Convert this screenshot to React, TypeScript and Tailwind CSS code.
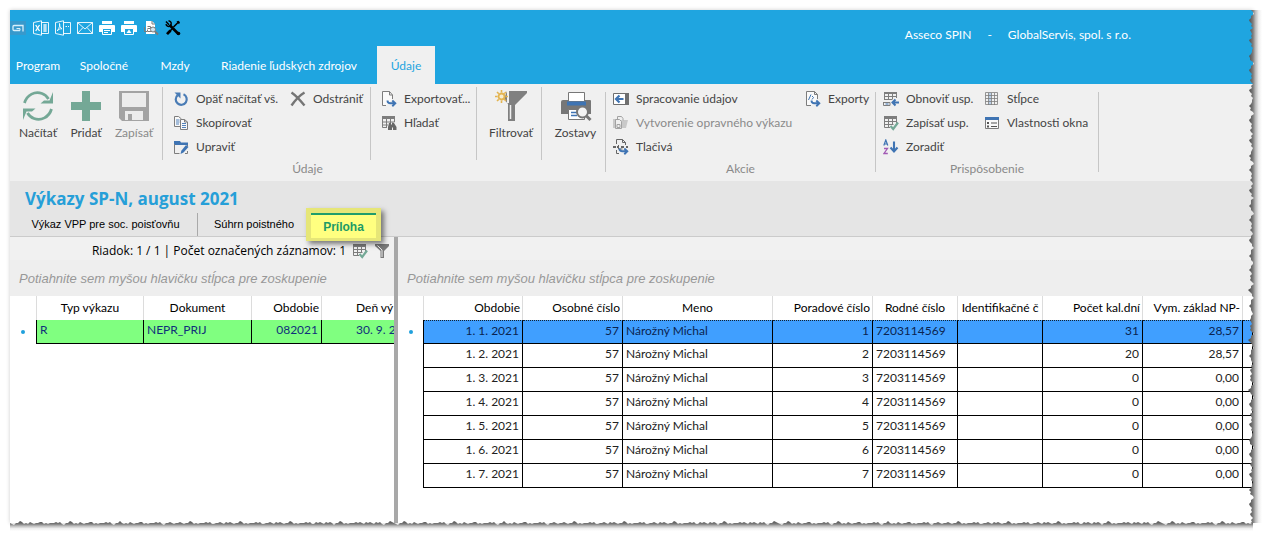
import type { ReactNode } from "react";

type EdgeProps = { className?: string };

const BLUE = "#3f74b3";
const GRAY = "#7d7d7d";
const GREEN = "#74a896";

function Svg({ size = 16, view = 16, children }: { size?: number; view?: number; children: ReactNode }) {
  return (
    <svg width={size} height={size} viewBox={`0 0 ${view} ${view}`} fill="none" className="shrink-0" aria-hidden="true">
      {children}
    </svg>
  );
}

/* ---- quick access icons ---- */

const LogoIcon = () => (
  <svg width="16" height="14" viewBox="0 0 16 14" fill="none" aria-hidden="true">
    <path d="M0 0h16v14H0z" fill="#3799cc" />
    <path d="M10 9.500H4a1 1 0 0 1-1-1v-3a1 1 0 0 1 1-1h9v6" stroke="#d8f0fb" strokeWidth="1.300" />
    <path d="M6.500 7.500H10v2" stroke="#d8f0fb" />
  </svg>
);

const ExcelIcon = () => (
  <Svg>
    <path d="M.5 2.500 8.500.800v14.400L.5 13.500zM8.500 2.500h7v11h-7M10 5h4M10 7h4M10 9h4M10 11h4M12 4v8" stroke="#fff" strokeWidth=".9" />
    <path d="m2.700 5 3.800 6m0-6-3.800 6" stroke="#fff" strokeWidth="1.300" />
  </Svg>
);

const PdfIcon = () => (
  <Svg>
    <path d="M.5 2.500 8.500.800v14.400L.5 13.500zM8.500 2.500h7v11h-7M10.500 6.500h1.500M13 6.500h1" stroke="#fff" strokeWidth=".9" />
    <path d="M4.500 3.500c.6 1.500.2 4-2.300 7.500.8-1.500 2.800-2.400 4.800-2.200C5.500 8 4.300 6 4.500 3.500z" stroke="#fff" strokeWidth=".9" />
  </Svg>
);

const MailIcon = () => (
  <Svg>
    <path d="M.5 2.500h15v11H.5zM.5 2.500 8 9l7.500-6.500M.5 13.500l5.500-6M15.500 13.500 10 7.500" stroke="#fff" strokeWidth=".9" />
  </Svg>
);

const PrinterIcon = ({ page }: { page?: boolean }) => (
  <Svg>
    <path d="M3 1h10v3H3zM1 5h14a1 1 0 0 1 1 1v6h-3V9H3v3H0V6a1 1 0 0 1 1-1z" fill="#fff" />
    <path d="M3.500 8.500h9v6h-9z" fill="#1fa5e0" stroke="#fff" />
    {page ? <path d="M5.500 13 8 9.500l2.500 3.500z" fill="#fff" /> : <path d="M5 10.500h6M5 12.500h4" stroke="#fff" />}
  </Svg>
);

const PreviewIcon = () => (
  <Svg>
    <path d="M3 1h6l3 3v10H3z" fill="#fff" />
    <path d="M9 1v3h3M4.500 6.500h3v2h-3M1.500 7v4.500h3v-2M5 11.500h4" stroke="#7b7b7b" />
    <circle cx="10" cy="9.500" r="2.500" fill="#cfe6f2" stroke="#7b7b7b" />
    <path d="m12 11.500 3 3" stroke="#7b7b7b" strokeWidth="2" />
  </Svg>
);

const ToolsIcon = () => (
  <Svg>
    <path d="m4.500 5 9 9" stroke="#000" strokeWidth="2.600" />
    <path d="m1 1.500 3 3.300M1 4.200C1.300 6 3 7 5.500 6L6.200 4C6.500 2 5 1 3.500.800" stroke="#000" strokeWidth="1.500" />
    <path d="m13.500 2-5 5M7 9l-4.500 4.500" stroke="#000" strokeWidth="1.600" />
    <path d="m11.500 1.500 2-.800 1.500 1.500-1 2z" fill="#000" />
    <path d="m4.500 9.500 2 2-3.500 3.500L1 13.300z" fill="#000" />
    <circle cx="13.500" cy="13.500" r="1.800" fill="#000" />
  </Svg>
);

/* ---- large ribbon icons ---- */

const ReloadIcon = () => (
  <Svg size={32} view={32}>
    <path d="M2.500 13C5 4.500 13 1 20 3.500c3 1 5 3 6.500 5.500M29.500 19C27 27.500 19 31 12 28.500 9 27.500 7 25.500 5.500 23" stroke={GREEN} strokeWidth="2.800" />
    <path d="M31 2v11.500H18.500L22 10.500h5.500zM1 30V18.500h12.500L10 21.500H4.500z" fill={GREEN} />
  </Svg>
);

const PlusIcon = () => (
  <Svg size={32} view={32}>
    <path d="M12 1h8v11h11v8H20v11h-8V20H1v-8h11z" fill={GREEN} />
  </Svg>
);

const SaveIcon = () => (
  <Svg size={32} view={32}>
    <path d="M1 1h30v30H4l-3-3z" fill="#a3a3a3" />
    <path d="M4 3h24v14H4zM7 21h18v9H7z" fill="#ececec" />
    <path d="M10 24h4v6h-4z" fill="#a3a3a3" />
  </Svg>
);

const FilterNewIcon = () => (
  <Svg size={32} view={32}>
    <path d="M12 1h20v2L20 15v16h-7V14L9 9z" fill="#808080" />
    <path d="M15.500 15v14" stroke="#f0f0f0" strokeWidth="1.500" />
    <path d="M13 1v12" stroke="#f0f0f0" strokeWidth="2" />
    <circle cx="6.500" cy="6.500" r="3" fill="#f7edcf" stroke="#e3b451" strokeWidth="1.800" />
    <path d="M6.500 0v2.500M6.500 10.500V13M0 6.500h2.500M10.500 6.500H13M2 2l1.800 1.800M9.300 9.300 11 11M11 2 9.300 3.800M3.800 9.300 2 11" stroke="#e3b451" strokeWidth="1.600" />
  </Svg>
);

const PrintPreviewIcon = () => (
  <Svg size={32} view={32}>
    <path d="M1 12a2 2 0 0 1 2-2h27a1 1 0 0 1 1 1v13H1z" fill="#777" />
    <path d="M8.500 2.500h16v9h-16z" fill="#fff" stroke="#777" />
    <path d="M7 11.500h19v4H7z" fill={BLUE} />
    <path d="M8.500 19.500h16v10h-16z" fill="#fff" stroke="#777" />
    <path d="M11 22.500h6M11 25.500h6" stroke={BLUE} strokeWidth="1.300" />
    <circle cx="22.500" cy="22" r="5.500" fill="#f4f4f4" stroke="#777" strokeWidth="2" />
    <path d="m26.500 26 4 4" stroke="#777" strokeWidth="3" />
  </Svg>
);

/* ---- small ribbon icons ---- */

const UndoIcon = () => (
  <Svg>
    <path d="M10.500 3.300a5.500 5.500 0 1 1-5.800.8" stroke="#4a7cb5" strokeWidth="2.200" />
    <path d="M1.500 1.500h6v6z" fill="#4a7cb5" />
  </Svg>
);

const CopyIcon = () => (
  <Svg>
    <path d="M1.500 1.500h4l3 2.500v7.500h-7z" fill="#f8f8f8" stroke={GRAY} />
    <path d="M3 5h3.500M3 7h3.500M3 9h3" stroke={BLUE} strokeWidth=".9" />
    <path d="M7.500 4.500h4l3 2.500v7.500h-7z" fill="#f8f8f8" stroke={GRAY} />
    <path d="M11.500 4.500V7h3" stroke={GRAY} />
    <path d="M9 8.500h4M9 10.500h4M9 12.500h4" stroke={BLUE} strokeWidth=".9" />
  </Svg>
);

const EditIcon = () => (
  <Svg>
    <path d="M1 2h6l1 1.500h7V6H1z" fill={BLUE} />
    <path d="M1.500 5v9.500h5M14.500 6v1.500M12 14.500h2.500V12" stroke={GRAY} />
    <path d="m13 6 2.500 2-5 5.500L7.500 15l.8-3.200z" fill={BLUE} />
  </Svg>
);

const CrossIcon = () => (
  <Svg>
    <path d="M1.500 1.500c5 3.500 8.500 7.500 13 13M14.500 1.500c-5 3-9.500 8-13 13" stroke="#757575" strokeWidth="2.400" />
  </Svg>
);

const Arrow = () => (
  <path d="M6.500 9.500c0 2 1 2.800 3 2.800h4M11.300 9.500l3 2.800-3 2.900" stroke={BLUE} strokeWidth="1.900" />
);

const ExportIcon = () => (
  <Svg>
    <path d="M5 14.500H1.500v-14h7l3 3.500v4" stroke={GRAY} fill="#fafafa" />
    <path d="M8.500.500V4h3" stroke={GRAY} />
    <Arrow />
  </Svg>
);

const FindIcon = () => (
  <Svg>
    <path d="M1 1h13v3H1z" fill={GRAY} />
    <path d="M1.500 3v9.500H6M5.500 4v8M9.500 4v4M13.500 3v4M1.500 7h12M1.500 10H7" stroke={GRAY} />
    <path d="m8 8 2-.5v2h1v-2l2 .5 2.500 4v3H12v-2.500h-1V15H7v-3z" fill="#686868" />
  </Svg>
);

const ProcessIcon = () => (
  <Svg>
    <path d="M.5 2.500h15v11H.5z" fill="#fff" stroke="#6f6f6f" />
    <path d="M12 2h4v12h-4z" fill="#6f6f6f" />
    <path d="M10.500 8H3.500M6.500 4.500 3 8l3.500 3.500" stroke={BLUE} strokeWidth="2.200" />
  </Svg>
);

const CorrectIcon = () => (
  <Svg>
    <path d="M0 4h4v9H0zM8 5h7l-2 8H8z" fill="#c9c9c9" />
    <path d="M4.500 4V1.500h4l1.500 2v2M2.500 4.500h4l2 2v7h-6z" stroke="#a2a2a2" fill="#efefef" />
    <path d="M4 9.500h3v3H4z" stroke="#a2a2a2" />
  </Svg>
);

const FormsIcon = () => (
  <Svg>
    <path d="M3.500 5V.500h6l3 3V6M9.500.500v3h3M3.500 11v3.500H6" stroke="#666" />
    <path d="M0 8h3M13 8h2M4 8h2M8 8h3" stroke="#666" strokeWidth="1.800" />
    <path d="M5.500 6v4h4" stroke="#666" />
    <Arrow />
  </Svg>
);

const ExportsIcon = () => (
  <Svg>
    <path d="M6 14.500H1.500V.500h8l3 3V8M9.500.500v3h3" stroke={GRAY} fill="#fafafa" />
    <path d="M3.500 9 6 3.500M7 5l1.500 1.500L7 8.500" stroke={BLUE} />
    <Arrow />
  </Svg>
);

const RestoreIcon = () => (
  <Svg>
    <path d="M1 1h13v2H1z" fill={GRAY} />
    <path d="M1.500 2v7M5.500 3v5M9.500 3v5M13.500 2v5M1.500 5.500h12M1.500 8.500h8M0 11.500h7v3H.500v-3" stroke={GRAY} />
    <path d="M2.500 13h3" stroke={BLUE} />
    <path d="M16 11.500h-5M12.500 8.500l-3 3 3 3" stroke={BLUE} strokeWidth="2" />
  </Svg>
);

const TableCheckIcon = () => (
  <Svg>
    <path d="M1 1h13v3H1z" fill={GRAY} />
    <path d="M1.500 3v9.500H7M5.500 4v8M9.500 4v6M13.500 3v5M1.500 6.500h12M1.500 9.500h9" stroke={GRAY} />
    <path d="m7.500 11 2.700 3L15 7.500" stroke={GREEN} strokeWidth="2.200" />
  </Svg>
);

const SortIcon = () => (
  <Svg>
    <path d="m.8 6.500 2-5.500 2 5.500M1.500 5h2.700" stroke={BLUE} strokeWidth="1.200" />
    <path d="M1 9.500h3.500L1 14.500h3.800" stroke="#a25bb5" strokeWidth="1.300" />
    <path d="M11 2.500v10M7.500 8.500l3.500 4 3.500-4" stroke={BLUE} strokeWidth="2.100" />
  </Svg>
);

const ColumnsIcon = () => (
  <Svg>
    <path d="M4.500 2h3v12h-3z" fill="#b9cfe8" />
    <path d="M1.500 1.500h12v12h-12zM4.500 2v12M7.500 2v12M10.500 2v12M1.500 4.500h12M1.500 7.500h12M1.500 10.500h12" stroke={GRAY} strokeWidth=".8" />
  </Svg>
);

const PropertiesIcon = () => (
  <Svg>
    <path d="M1.500 2.500h13v11h-13z" fill="#fafafa" stroke={GRAY} />
    <path d="M1 2h14v3H1z" fill={BLUE} />
    <path d="M3 7h2v2H3zM3 10.500h2v2H3z" fill="#555" />
    <path d="M7 8h6M7 11.500h6" stroke="#555" />
  </Svg>
);

const FunnelIcon = () => (
  <Svg>
    <path d="M1 1h14v2l-5 5v7H6.500V8L1 3z" fill="#7a7a7a" />
    <path d="M3.500 2.500 8 7v7" stroke="#ededed" />
  </Svg>
);

/* ---- ribbon ---- */

function LargeButton({ icon, label, disabled }: { icon: ReactNode; label: string; disabled?: boolean }) {
  return (
    <button
      type="button"
      disabled={disabled}
      className="flex w-12 flex-col items-center justify-start gap-[3px] pt-[3px] leading-4 text-[#444] disabled:text-[#8a8a8a]"
    >
      {icon}
      {label}
    </button>
  );
}

function SmallButton({ icon, label, disabled }: { icon: ReactNode; label: string; disabled?: boolean }) {
  return (
    <button
      type="button"
      disabled={disabled}
      className="flex h-6 items-center gap-[7px] text-left whitespace-nowrap text-[#444] disabled:text-[#8a8a8a]"
    >
      {icon}
      {label}
    </button>
  );
}

function RibbonGroup({ title, children }: { title: string; children: ReactNode }) {
  return (
    <section className="flex shrink-0 flex-col pt-[3px]">
      <div className="flex h-[73px]">{children}</div>
      <h2 className="text-center leading-[18px] text-[#8a8a8a]">{title}</h2>
    </section>
  );
}

const GroupLine = () => <div className="mt-2 h-20 w-px shrink-0 bg-[#c6c6c6]" />;
const ColumnLine = () => <div className="w-px shrink-0 bg-[#c6c6c6]" />;

function Ribbon() {
  return (
    <div className="flex h-[97px] bg-[#f0f0f0]">
      <RibbonGroup title="Údaje">
        <div className="flex w-[152px] pl-1">
          <LargeButton icon={<ReloadIcon />} label="Načítať" />
          <LargeButton icon={<PlusIcon />} label="Pridať" />
          <LargeButton icon={<SaveIcon />} label="Zapísať" disabled />
        </div>
        <ColumnLine />
        <div className="flex w-[207px] pl-2.5">
          <div className="w-[117px]">
            <SmallButton icon={<UndoIcon />} label="Opäť načítať vš." />
            <SmallButton icon={<CopyIcon />} label="Skopírovať" />
            <SmallButton icon={<EditIcon />} label="Upraviť" />
          </div>
          <div>
            <SmallButton icon={<CrossIcon />} label="Odstrániť" />
          </div>
        </div>
        <ColumnLine />
        <div className="w-[105px] pl-2.5">
          <SmallButton icon={<ExportIcon />} label="Exportovať..." />
          <SmallButton icon={<FindIcon />} label="Hľadať" />
        </div>
        <ColumnLine />
        <div className="flex w-16 justify-center pl-1">
          <LargeButton icon={<FilterNewIcon />} label="Filtrovať" />
        </div>
        <ColumnLine />
        <div className="flex w-[63px] justify-center pl-1">
          <LargeButton icon={<PrintPreviewIcon />} label="Zostavy" />
        </div>
      </RibbonGroup>
      <GroupLine />
      <RibbonGroup title="Akcie">
        <div className="flex w-[269px] pl-[7px]">
          <div className="w-[192px]">
            <SmallButton icon={<ProcessIcon />} label="Spracovanie údajov" />
            <SmallButton icon={<CorrectIcon />} label="Vytvorenie opravného výkazu" disabled />
            <SmallButton icon={<FormsIcon />} label="Tlačivá" />
          </div>
          <div>
            <SmallButton icon={<ExportsIcon />} label="Exporty" />
          </div>
        </div>
      </RibbonGroup>
      <GroupLine />
      <RibbonGroup title="Prispôsobenie">
        <div className="flex w-[222px] pl-[7px]">
          <div className="w-[101px]">
            <SmallButton icon={<RestoreIcon />} label="Obnoviť usp." />
            <SmallButton icon={<TableCheckIcon />} label="Zapísať usp." />
            <SmallButton icon={<SortIcon />} label="Zoradiť" />
          </div>
          <div>
            <SmallButton icon={<ColumnsIcon />} label="Stĺpce" />
            <SmallButton icon={<PropertiesIcon />} label="Vlastnosti okna" />
          </div>
        </div>
      </RibbonGroup>
      <GroupLine />
    </div>
  );
}

function QuickButton({ label, children }: { label: string; children: ReactNode }) {
  return (
    <button type="button" aria-label={label} className="flex w-[22px] justify-center">
      {children}
    </button>
  );
}

function TitleBar() {
  const tab = "h-full pt-0.5 text-center";
  return (
    <header className="bg-[#1fa5e0] text-white">
      <div className="flex h-9 items-center justify-between pr-[122px]">
        <div className="flex items-center">
          <button type="button" aria-label="Asseco" className="w-5">
            <LogoIcon />
          </button>
          <QuickButton label="Excel"><ExcelIcon /></QuickButton>
          <QuickButton label="PDF"><PdfIcon /></QuickButton>
          <QuickButton label="E-mail"><MailIcon /></QuickButton>
          <QuickButton label="Tlač"><PrinterIcon /></QuickButton>
          <QuickButton label="Tlač strany"><PrinterIcon page /></QuickButton>
          <QuickButton label="Náhľad"><PreviewIcon /></QuickButton>
          <QuickButton label="Nastavenia"><ToolsIcon /></QuickButton>
        </div>
        <p className="flex gap-4 pt-3.5">
          <span>Asseco SPIN</span>
          <span>-</span>
          <span>GlobalServis, spol. s r.o.</span>
        </p>
      </div>
      <nav className="flex h-[38px]">
        <button type="button" className={`${tab} w-14`}>Program</button>
        <button type="button" className={`${tab} w-[76px]`}>Spoločné</button>
        <button type="button" className={`${tab} w-[66px]`}>Mzdy</button>
        <button type="button" className={`${tab} w-[162px]`}>Riadenie ľudských zdrojov</button>
        <button type="button" className={`${tab} ml-[7px] w-[58px] bg-[#f0f0f0] text-[#1fa5e0]`}>Údaje</button>
      </nav>
    </header>
  );
}

function Heading() {
  return (
    <div className="flex h-14 flex-col justify-between border-b border-[#cbcbcb] bg-[#e5e5e5] pt-1">
      <h1 className="pl-[15px] font-['Open_Sans',sans-serif] text-[17px] leading-7 font-bold text-[#269fd8]">
        Výkazy SP-N, august 2021
      </h1>
      <nav className="flex h-[23px] font-['Liberation_Sans',sans-serif] text-[11px] text-black">
        <button type="button" className="w-[188px] border-r border-[#a9a9a9] pl-1">
          Výkaz VPP pre soc. poisťovňu
        </button>
        <button type="button" className="w-[108px] pl-1">Súhrn poistného</button>
        <button
          type="button"
          className="relative z-10 -my-[5px] flex w-[75px] bg-[#e6e678] px-[5px] pt-[5px] pb-[3px] text-[12px] shadow-[3px_3px_5px_rgba(0,0,0,0.5)]"
        >
          <span className="flex h-full w-full items-center justify-center border-t-2 border-[#1f9d6b] bg-[#ffff80] font-bold text-[#1d9b66]">
            Príloha
          </span>
        </button>
      </nav>
    </div>
  );
}

/* ---- grids ---- */

interface Column {
  title: string;
  width: string;
  align: string;
}

const GROUP_HINT = "Potiahnite sem myšou hlavičku stĺpca pre zoskupenie";

const REPORT_COLUMNS: Column[] = [
  { title: "Typ výkazu", width: "w-[107px]", align: "text-center" },
  { title: "Dokument", width: "w-[108px]", align: "text-center" },
  { title: "Obdobie", width: "w-[70px]", align: "text-right" },
];

const DETAIL_COLUMNS: Column[] = [
  { title: "Obdobie", width: "w-[99px]", align: "text-right" },
  { title: "Osobné číslo", width: "w-[100px]", align: "text-right" },
  { title: "Meno", width: "w-[150px]", align: "text-center" },
  { title: "Poradové číslo", width: "w-[100px]", align: "text-right" },
  { title: "Rodné číslo", width: "w-[85px]", align: "text-center" },
  { title: "Identifikačné č", width: "w-[85px]", align: "text-center" },
  { title: "Počet kal.dní", width: "w-[100px]", align: "text-right" },
  { title: "Vym. základ NP-", width: "w-[100px]", align: "text-right" },
];

const DETAIL_ROWS = [
  { period: "1. 1. 2021", order: 1, days: 31, base: "28,57" },
  { period: "1. 2. 2021", order: 2, days: 20, base: "28,57" },
  { period: "1. 3. 2021", order: 3, days: 0, base: "0,00" },
  { period: "1. 4. 2021", order: 4, days: 0, base: "0,00" },
  { period: "1. 5. 2021", order: 5, days: 0, base: "0,00" },
  { period: "1. 6. 2021", order: 6, days: 0, base: "0,00" },
  { period: "1. 7. 2021", order: 7, days: 0, base: "0,00" },
];

function GroupBar() {
  return (
    <p className="h-9 overflow-hidden bg-[#eee] pt-px pl-[9px] font-['Liberation_Sans',sans-serif] text-[13px] leading-9 whitespace-nowrap text-[#989898] italic">
      {GROUP_HINT}
    </p>
  );
}

const headCell = "h-6 border-r border-[#dcdcdc] px-[2px] font-normal whitespace-nowrap";
const cell = "h-6 border-r border-b border-black px-[3px] align-top leading-5 whitespace-nowrap";

function Marker({ active }: { active?: boolean }) {
  return (
    <td className="border-r border-black">
      {active && <div className="mx-auto size-1 rounded-full bg-[#1fa0dc]" />}
    </td>
  );
}

function ReportPane() {
  return (
    <section className="w-[384px] shrink-0 overflow-hidden">
      <div className="flex h-[23px] items-center justify-end bg-[#f1f1f1] pt-1 pr-1 font-['Open_Sans',sans-serif] text-black">
        <span className="pr-1.5">Riadok: 1 / 1 | Počet označených záznamov: 1</span>
        <button type="button" aria-label="Označiť" className="mr-1.5"><TableCheckIcon /></button>
        <button type="button" aria-label="Filter"><FunnelIcon /></button>
      </div>
      <GroupBar />
      <table className="w-full table-fixed border-separate border-spacing-0">
        <thead>
          <tr>
            <th className={`${headCell} w-[27px]`} />
            {REPORT_COLUMNS.map((column) => (
              <th key={column.title} className={`${headCell} ${column.width} ${column.align}`}>
                {column.title}
              </th>
            ))}
            <th className="pl-[34px] text-left font-normal whitespace-nowrap">Deň vý</th>
          </tr>
        </thead>
        <tbody className="text-[#10307a]">
          <tr>
            <Marker active />
            <td className={`${cell} bg-[#80ff80]`}>R</td>
            <td className={`${cell} bg-[#80ff80]`}>NEPR_PRIJ</td>
            <td className={`${cell} bg-[#80ff80] text-right`}>082021</td>
            <td className="border-b border-black bg-[#80ff80] pl-[34px] align-top leading-5 whitespace-nowrap">
              30. 9. 2
            </td>
          </tr>
        </tbody>
      </table>
    </section>
  );
}

function DetailPane() {
  return (
    <section className="min-w-0 flex-1 overflow-hidden">
      <div className="h-[23px] bg-[#f1f1f1]" />
      <GroupBar />
      <table className="w-full table-fixed border-separate border-spacing-0">
        <thead>
          <tr>
            <th className={`${headCell} w-[26px]`} />
            {DETAIL_COLUMNS.map((column) => (
              <th key={column.title} className={`${headCell} ${column.width} ${column.align}`}>
                {column.title}
              </th>
            ))}
            <th />
          </tr>
        </thead>
        <tbody className="text-[#222]">
          {DETAIL_ROWS.map((row, index) => {
            const selected = index === 0;
            const tone = selected
              ? `${cell} border-t border-t-[#123] bg-[#409fff] text-[#0b2450] [border-top-style:dotted]`
              : cell;
            return (
              <tr key={row.order}>
                <Marker active={selected} />
                <td className={`${tone} text-right`}>{row.period}</td>
                <td className={`${tone} text-right`}>57</td>
                <td className={tone}>Nárožný Michal</td>
                <td className={`${tone} text-right`}>{row.order}</td>
                <td className={tone}>7203114569</td>
                <td className={tone} />
                <td className={`${tone} text-right`}>{row.days}</td>
                <td className={`${tone} text-right`}>{row.base}</td>
                <td className={tone} />
              </tr>
            );
          })}
        </tbody>
      </table>
    </section>
  );
}

/* ---- torn paper edge ---- */

const TILE = 384;

// jagged profile that closes on itself, so the pattern tile repeats without a seam
const TEETH = Array.from({ length: TILE / 2 + 1 }, (_, i) => {
  const turn = (i / (TILE / 2)) * 2 * Math.PI;
  const wave = Math.sin(turn * 23) + Math.sin(turn * 31) * 0.9;
  const grain = i % (TILE / 2) === 0 ? 1 : ((i * 7) % 5) * 0.6;
  return { at: i * 2, wave, grain };
});

const EDGE_STOPS = (
  <>
    <stop offset="0" stopColor="#4f4f4f" />
    <stop offset="0.3" stopColor="#7c7c7c" />
    <stop offset="0.5" stopColor="#bcbcbc" />
    <stop offset="0.75" stopColor="#efefef" />
    <stop offset="1" stopColor="#fff" />
  </>
);

function TornRight({ className }: EdgeProps) {
  const points = TEETH.map((t) => `${Math.round(3 + t.wave + t.grain)},${t.at}`).join(" ");
  return (
    <svg className={className} aria-hidden="true">
      <defs>
        <linearGradient id="edge-right" gradientUnits="userSpaceOnUse" x1="2" y1="0" x2="15" y2="0">
          {EDGE_STOPS}
        </linearGradient>
        <pattern id="torn-right" width="20" height={TILE} patternUnits="userSpaceOnUse">
          <polygon points={`20,0 ${points} 20,${TILE}`} fill="url(#edge-right)" />
        </pattern>
      </defs>
      <rect width="100%" height="100%" fill="url(#torn-right)" />
    </svg>
  );
}

function TornBottom({ className }: EdgeProps) {
  const points = TEETH.map((t) => `${t.at},${Math.round(2 + t.wave * 0.5 + t.grain * 0.8)}`).join(" ");
  return (
    <svg className={className} aria-hidden="true">
      <defs>
        <linearGradient id="edge-bottom" gradientUnits="userSpaceOnUse" x1="0" y1="1" x2="0" y2="11">
          {EDGE_STOPS}
        </linearGradient>
        <pattern id="torn-bottom" width={TILE} height="14" patternUnits="userSpaceOnUse">
          <polygon points={`0,14 ${points} ${TILE},14`} fill="url(#edge-bottom)" />
        </pattern>
      </defs>
      <rect width="100%" height="100%" fill="url(#torn-bottom)" />
    </svg>
  );
}

export default function App() {
  return (
    <main className="flex min-h-screen bg-white pt-2.5 pr-[17px] pb-[18px] pl-2.5 font-['Lato',sans-serif] text-[12px]">
      <div className="relative flex min-w-0 flex-1 flex-col bg-white shadow-[0_0_4px_rgba(0,0,0,0.2)]">
        <TitleBar />
        <Ribbon />
        <Heading />
        <div className="flex flex-1">
          <ReportPane />
          <div className="w-1 shrink-0 bg-[#a8a8a8]" />
          <DetailPane />
        </div>
        <TornBottom className="absolute bottom-[-11px] left-0 h-3.5 w-full" />
        <TornRight className="absolute top-0 right-[-14px] h-full w-5" />
      </div>
    </main>
  );
}
